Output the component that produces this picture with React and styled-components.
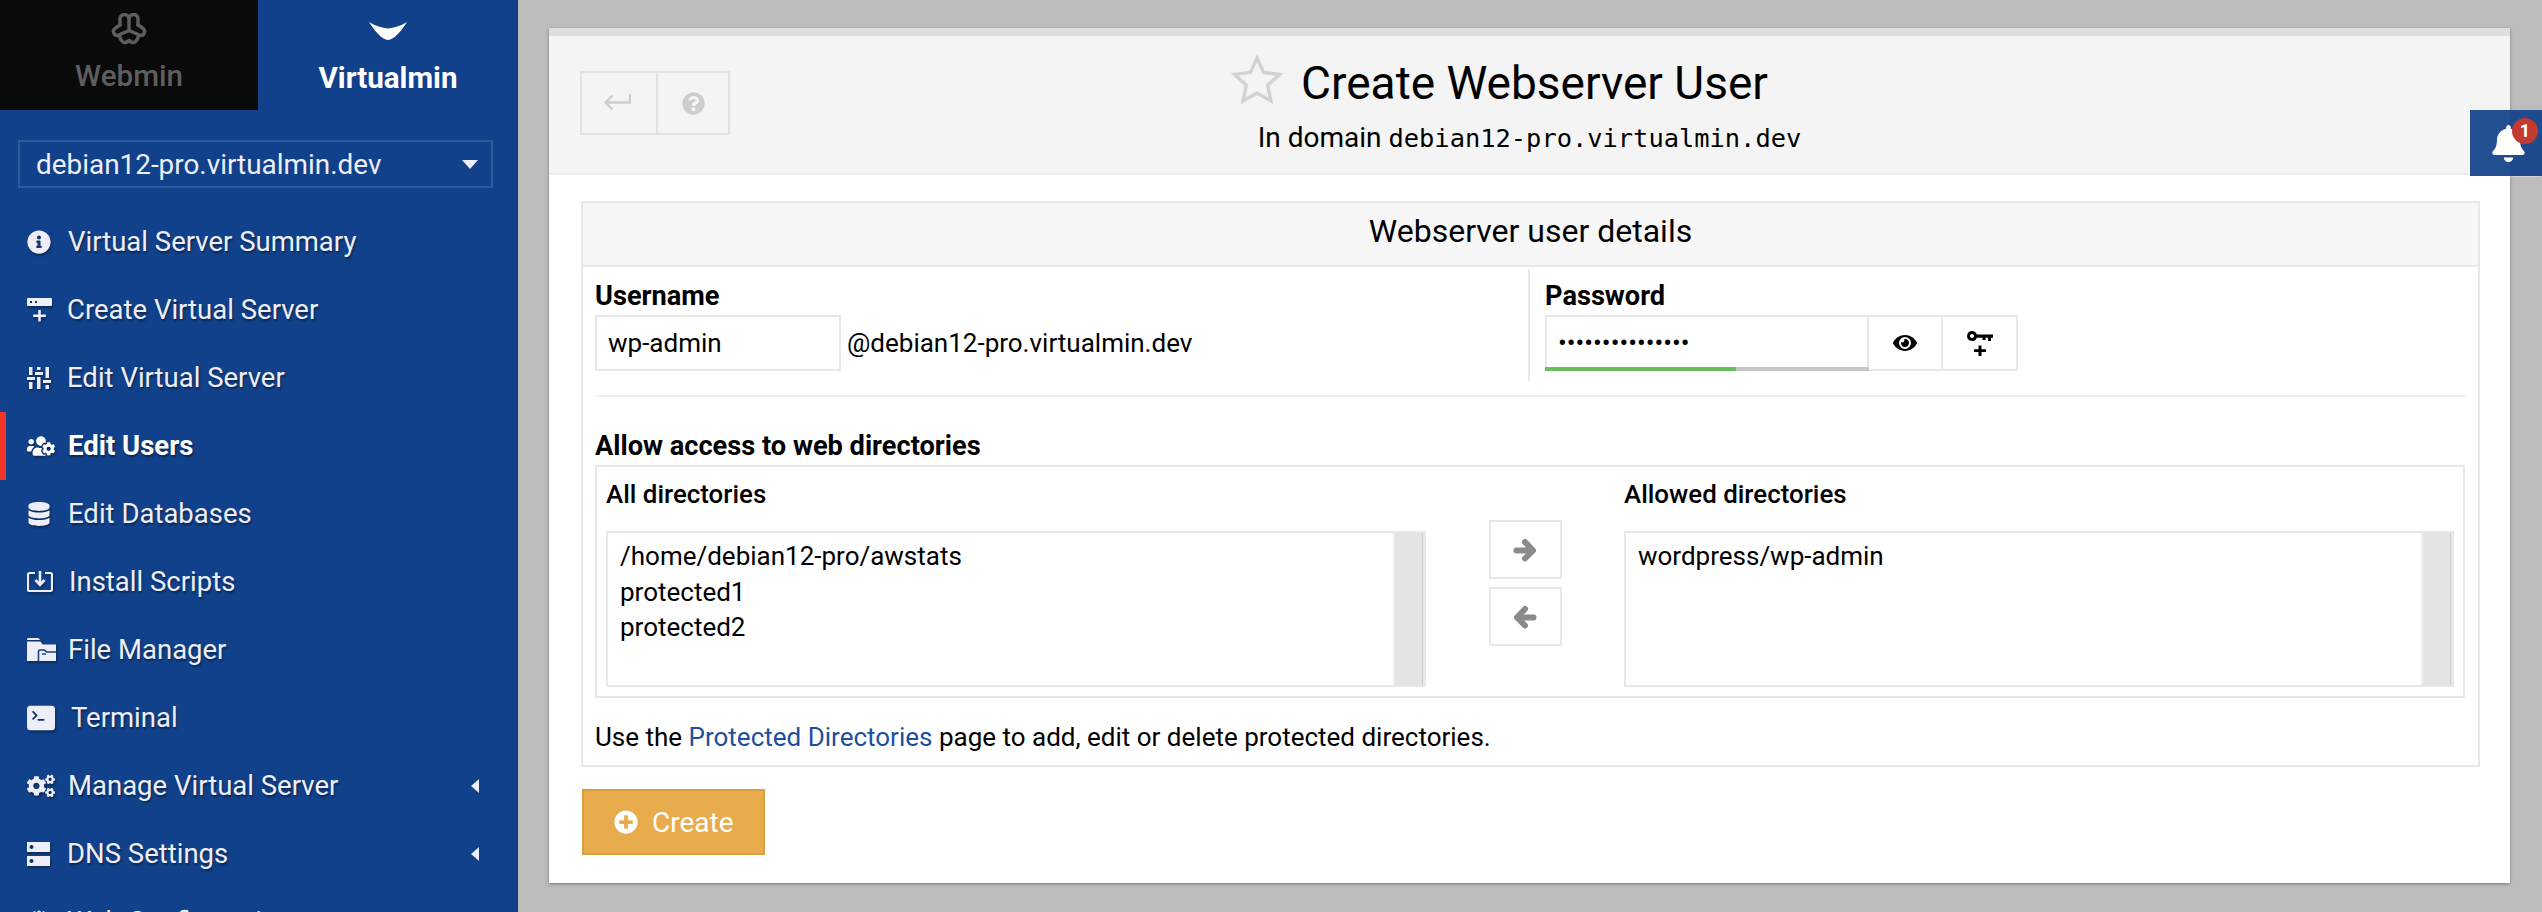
import React from 'react'
import styled, { createGlobalStyle } from 'styled-components'
import {
  FaInfoCircle, FaUsersCog, FaDatabase, FaCogs, FaGlobe, FaEye,
  FaQuestionCircle, FaBell, FaPlusCircle,
} from 'react-icons/fa'
import { BsTerminalFill } from 'react-icons/bs'

const GlobalStyle = createGlobalStyle`
  html, body { margin: 0; padding: 0; height: 100%; background: #bcbcbc; }
  body { font-family: Roboto, "Liberation Sans", sans-serif; font-size: 26px; color: #000; overflow: hidden; }
  * { box-sizing: border-box; }
`

const Page = styled.div`
  display: flex;
  height: 912px;
  position: relative;
  overflow: hidden;
`

const Sidebar = styled.aside`
  flex: 0 0 518px;
  height: 912px;
  overflow: hidden;
  background: #11418a;
  color: #eeeef9;
`

const Tabs = styled.div`
  display: grid;
  grid-template-columns: 258px 1fr;
  height: 110px;
`

const Tab = styled.div`
  display: flex;
  flex-direction: column;
  align-items: center;
  background: ${p => (p.$active ? 'transparent' : '#0a0a0a')};
  color: ${p => (p.$active ? '#fff' : '#5e5e5e')};
  font-weight: ${p => (p.$active ? 700 : 500)};
  font-size: 29.6px;
  height: 110px;
  padding-top: ${p => (p.$active ? '22px' : '13px')};
`

const TabLabel = styled.span`
  line-height: 34px;
  margin-top: ${p => p.$gap}px;
`

const ServerSelect = styled.div`
  display: flex;
  align-items: center;
  justify-content: space-between;
  height: 48px;
  margin: 30px 25px 0 18px;
  padding: 0 13px 0 16px;
  border: 2px solid #2f5b9c;
  font-size: 27.9px;
  color: #eeeef9;
`

const Caret = styled.span`
  width: 0;
  height: 0;
  border-left: 8px solid transparent;
  border-right: 8px solid transparent;
  border-top: 9px solid #eeeef9;
`

const Menu = styled.nav`
  margin-top: 20px;
`

const MenuItem = styled.div`
  display: flex;
  align-items: center;
  height: 68px;
  padding: 0 39px 0 ${p => (p.$active ? 21 : 27)}px;
  border-left: ${p => (p.$active ? '6px solid #f13528' : 'none')};
  font-size: 27.5px;
  font-weight: ${p => (p.$active ? 700 : 400)};
  color: ${p => (p.$active ? '#fff' : '#eeeef9')};
  text-shadow: 1px 2px 2px rgba(0, 0, 0, 0.4);
`

const MenuIcon = styled.span`
  flex: 0 0 ${p => p.$slot}px;
  display: flex;
  align-items: center;
  font-size: ${p => p.$size || 24}px;
  filter: drop-shadow(1px 2px 1px rgba(0, 0, 0, 0.35));
`

const MenuText = styled.span`
  flex: 1;
  margin-top: -2px;
`

const Collapse = styled.span`
  width: 0;
  height: 0;
  border-top: 7px solid transparent;
  border-bottom: 7px solid transparent;
  border-right: 8px solid #eeeef9;
`

const Main = styled.main`
  flex: 1;
  padding: 28px 32px 0 31px;
`

const Panel = styled.section`
  height: 855px;
  background: #fff;
  box-shadow: 0 1px 3px rgba(0, 0, 0, 0.35);
`

const PanelTop = styled.header`
  display: grid;
  grid-template-columns: 1fr auto 1fr;
  height: 147px;
  padding: 0 31px;
  background: #f4f4f4;
  border-top: 8px solid #dedede;
  border-bottom: 2px solid #ebebeb;
`

const BackGroup = styled.div`
  display: flex;
  align-self: start;
  justify-self: start;
  margin-top: 35px;
  border: 2px solid #e2e2e2;
`

const BackButton = styled.span`
  display: flex;
  align-items: center;
  justify-content: center;
  width: ${p => p.$w}px;
  height: 60px;
  color: #cdcdcd;
  font-size: 23px;
  border-left: ${p => (p.$first ? 'none' : '2px solid #e2e2e2')};
`

const TitleBlock = styled.div`
  display: flex;
  flex-direction: column;
  align-items: center;
`

const TitleRow = styled.div`
  display: flex;
  align-items: center;
  gap: 17px;
  padding-right: 61px;
  height: 76px;
  margin-top: 9px;
`

const Title = styled.h1`
  margin: 0;
  font-size: 46px;
  font-weight: 400;
  line-height: 60px;
  white-space: nowrap;
`

const Subtitle = styled.div`
  margin-top: 0;
  font-size: 28px;
  line-height: 34px;
  white-space: nowrap;
`

const Mono = styled.span`
  font-family: "DejaVu Sans Mono", "Liberation Mono", monospace;
  font-size: 25.4px;
`

const Body = styled.div`
  padding: 26px 30px 0 32px;
`

const Table = styled.div`
  border: 2px solid #e8e8e8;
`

const TableHead = styled.div`
  display: flex;
  align-items: center;
  justify-content: center;
  height: 64px;
  padding-bottom: 6px;
  background: #f7f7f7;
  border-bottom: 2px solid #e8e8e8;
  font-size: 32px;
`

const TableBody = styled.div`
  padding: 2px 13px 11px 12px;
`

const Columns = styled.div`
  display: grid;
  grid-template-columns: 935px 1fr;
`

const Column = styled.div`
  padding: 10px 0 10px ${p => (p.$right ? 15 : 0)}px;
  border-right: ${p => (p.$right ? 'none' : '2px solid #e8e8e8')};
`

const Label = styled.div`
  font-weight: 700;
  line-height: 34px;
  font-size: 27.2px;
`

const FieldRow = styled.div`
  display: flex;
  align-items: center;
  margin-top: 2px;
`

const TextInput = styled.input`
  width: ${p => p.$w}px;
  height: 56px;
  padding: 0 11px;
  border: 2px solid #e8e8e8;
  border-radius: 0;
  font: inherit;
  color: #000;
  outline: none;
  background: #fff;
`

const Domain = styled.span`
  margin-left: 6px;
`

const PasswordWrap = styled.div`
  position: relative;
  width: 324px;
  height: 56px;
`

const Strength = styled.div`
  position: absolute;
  left: 0;
  right: 0;
  bottom: 0;
  height: 4px;
  background: #c6c6c6;
`

const StrengthBar = styled.div`
  height: 100%;
  background: #6abd5f;
`

const IconButton = styled.span`
  display: flex;
  align-items: center;
  justify-content: center;
  width: ${p => p.$w}px;
  height: 56px;
  margin-left: -2px;
  border: 2px solid #e8e8e8;
  font-size: 24px;
  color: #000;
`

const Rule = styled.hr`
  margin: 14px 0 0 1px;
  border: 0;
  height: 2px;
  background: #eeeeee;
`

const SectionLabel = styled(Label)`
  margin-top: 32px;
`

const PickerBox = styled.div`
  display: grid;
  grid-template-columns: 820px 1fr 830px;
  margin-top: 2px;
  height: 233px;
  padding: 10px 9px 9px;
  border: 2px solid #e8e8e8;
`

const PickerColumn = styled.div`
  display: flex;
  flex-direction: column;
`

const PickerLabel = styled(Label)`
  font-size: 25.9px;
  font-weight: 500;
  margin-bottom: 20px;
`

const ListBox = styled.div`
  display: flex;
  height: 156px;
  border: 2px solid #e8e8e8;
  border-right-width: 3px;
`

const ListLines = styled.div`
  flex: 1;
  padding: 6px 12px;
  line-height: 35.5px;
  border-right: 2px solid #efefef;
`

const ListTrack = styled.div`
  flex: 0 0 28px;
  background: #e4e4e4;
  border-right: 1px solid #cfcfcf;
`

const MoveButtons = styled.div`
  display: flex;
  flex-direction: column;
  align-items: center;
  gap: 8px;
  margin-top: 43px;
`

const MoveButton = styled.span`
  display: flex;
  align-items: center;
  justify-content: center;
  width: 73px;
  height: 59px;
  border: 2px solid #e8e8e8;
`

const Help = styled.p`
  margin: 22px 0 0;
  line-height: 34px;
`

const HelpLink = styled.a`
  color: #1c4fa0;
  text-decoration: none;
`

const CreateButton = styled.button`
  display: flex;
  align-items: center;
  gap: 14px;
  width: 183px;
  height: 66px;
  margin: 22px 0 0 1px;
  padding: 0 0 0 30px;
  border: 2px solid #d9a043;
  border-radius: 0;
  background: #e8ac4c;
  color: #fff;
  font: inherit;
  font-size: 28px;
  svg { width: 24px; height: 24px; }
`

const Bell = styled.div`
  position: absolute;
  top: 110px;
  right: 0;
  width: 72px;
  height: 66px;
  background: rgba(17, 65, 138, 0.92);
  color: #fff;
  font-size: 37px;
  display: flex;
  align-items: center;
  justify-content: center;
  padding-left: 4px;
  box-shadow: -1px 1px 1px rgba(255, 255, 255, 0.3);
`

const Badge = styled.span`
  position: absolute;
  top: 8px;
  right: 4px;
  width: 26px;
  height: 26px;
  border-radius: 50%;
  background: #c33a30;
  color: #fff;
  font-size: 18px;
  font-weight: 700;
  line-height: 26px;
  text-align: center;
`

const WebminLogo = () => (
  <svg width="36" height="32" viewBox="0 0 36 32" fill="none" stroke="#5e5e5e" strokeWidth="3.400" strokeLinejoin="round" strokeLinecap="round">
    <path d="M9 12V6.500a4.500 4.500 0 0 1 9-1 4.500 4.500 0 0 1 9 1V12" />
    <path d="M18 5v12" />
    <path d="M9 12L4.500 15A4 4 0 0 0 6.500 22.500L18 17.500L29.500 22.500A4 4 0 0 0 31.500 15L27 12" />
    <path d="M8.500 23C9.500 27 12 30.500 15 29.500L18 27.500L21 29.500C24 30.500 26.500 27 27.500 23" />
  </svg>
)

const VirtualminLogo = () => (
  <svg width="38" height="18" viewBox="0 0 38 18" fill="#fff">
    <path d="M0 0C7 4 13 6 19 6.500 25 6 31 4 38 0 33 8 25 18 19 18 13 18 5 8 0 0Z" />
  </svg>
)

const StarIcon = () => (
  <svg width="54" height="52" viewBox="0 0 54 52" fill="none" stroke="#d2d2d2" strokeWidth="3.400" strokeLinejoin="miter" style={{ marginTop: '-9px' }}>
    <path d="M27 5l6.600 14.500 15.900 1.900-11.800 10.800 3.200 15.700L27 40l-13.900 7.900 3.200-15.700L4.500 21.400l15.900-1.900Z" />
  </svg>
)

const ServerPlusIcon = () => (
  <svg width="25" height="24" viewBox="0 0 25 24" fill="#eeeef9" fillRule="evenodd">
    <path d="M1 0h23a1 1 0 0 1 1 1v6a1 1 0 0 1-1 1H1a1 1 0 0 1-1-1V1a1 1 0 0 1 1-1ZM3 3v2h2V3ZM8 3v2h2V3Z" />
    <path d="M11.200 12h2.600v4.500h5v2.600h-5v4.500h-2.600v-4.500h-5v-2.600h5Z" />
  </svg>
)

const SlidersIcon = () => (
  <svg width="24" height="22" viewBox="0 0 24 22" fill="#eeeef9">
    <path d="M2 0h3.500v8H2ZM0 10h8v3H0ZM2 15h3.500v7H2Z" />
    <path d="M10 0h3.500v3H10ZM8 5h8v3H8ZM10 10h3.500v12H10Z" />
    <path d="M18.500 0H22v11h-3.500ZM16 13h8v3h-8ZM18.500 18H22v4h-3.500Z" />
  </svg>
)

const InstallIcon = () => (
  <svg width="26" height="22" viewBox="0 0 26 22" fill="none" stroke="#eeeef9" strokeWidth="2.200">
    <path d="M8 2H2.500A1.500 1.500 0 0 0 1 3.500v15A1.500 1.500 0 0 0 2.500 20h21a1.500 1.500 0 0 0 1.500-1.500v-15A1.500 1.500 0 0 0 23.500 2H18" />
    <path d="M13 0v13M8.500 9l4.500 4.800L17.500 9" strokeWidth="2.600" />
  </svg>
)

const FoldersIcon = () => (
  <svg width="29" height="24" viewBox="0 0 29 24" fill="#eeeef9">
    <path d="M0 1.500A1.500 1.500 0 0 1 1.500 0h9a3 3 0 0 1 2.500 2H0Z" />
    <path d="M0 3.500h13.500L15.500 6.500H29V23H0Z" />
    <path d="M11.500 23V13.500a1.500 1.500 0 0 1 1.500-1.500h4.500l2 2H29" fill="none" stroke="#11418a" strokeWidth="1.600" />
    <path d="M15 16h4" fill="none" stroke="#11418a" strokeWidth="1.400" />
  </svg>
)

const DnsIcon = () => (
  <svg width="23" height="24" viewBox="0 0 23 24" fill="#eeeef9" fillRule="evenodd">
    <path d="M0 0h23v10H0ZM4.500 3a2 2 0 1 0 0 4 2 2 0 0 0 0-4Z" />
    <path d="M0 14h23v10H0ZM4.500 17a2 2 0 1 0 0 4 2 2 0 0 0 0-4Z" />
  </svg>
)

const ReturnIcon = () => (
  <svg width="28" height="17" viewBox="0 0 28 17" fill="none" stroke="#cdcdcd" strokeWidth="2.400" style={{ marginTop: '-2px', marginLeft: '-4px' }}>
    <path d="M27 0v8.500H3M9.500 1.500l-7 7 7 7" />
  </svg>
)

const KeyPlusIcon = () => (
  <svg width="26" height="25" viewBox="0 0 26 25" fill="#000" fillRule="evenodd">
    <path d="M5 0a5 5 0 0 1 4.800 3.500H26v3.200h-2v3.300h-3V6.700h-2.500V9h-3V6.700H9.800A5 5 0 1 1 5 0Zm0 3a2 2 0 1 0 0 4 2 2 0 0 0 0-4Z" />
    <path d="M11.500 14.500h3v3.700h4.500v2.800h-4.500V25h-3v-4H7v-2.800h4.500Z" />
  </svg>
)

const MoveArrow = ({ flip }) => (
  <svg width="24" height="24" viewBox="0 0 24 24" fill="none" stroke="#8a8a8a" strokeWidth="6" strokeLinecap="round" strokeLinejoin="round" style={flip ? { transform: 'scaleX(-1)' } : undefined}>
    <path d="M3.500 12.500H19" />
    <path d="M12 4l8 8.500-8 8" />
  </svg>
)

const menuItems = [
  { label: 'Virtual Server Summary', icon: <FaInfoCircle />, slot: 41 },
  { label: 'Create Virtual Server', icon: <ServerPlusIcon />, slot: 40 },
  { label: 'Edit Virtual Server', icon: <SlidersIcon />, slot: 40 },
  { label: 'Edit Users', icon: <FaUsersCog />, slot: 41, size: 28, active: true },
  { label: 'Edit Databases', icon: <FaDatabase />, slot: 41 },
  { label: 'Install Scripts', icon: <InstallIcon />, slot: 42 },
  { label: 'File Manager', icon: <FoldersIcon />, slot: 41 },
  { label: 'Terminal', icon: <BsTerminalFill />, slot: 44, size: 28 },
  { label: 'Manage Virtual Server', icon: <FaCogs />, slot: 41, size: 28, more: true },
  { label: 'DNS Settings', icon: <DnsIcon />, slot: 40, more: true },
  { label: 'Web Configuration', icon: <FaGlobe />, slot: 40, more: true },
]

function DirectoryList({ lines }) {
  return (
    <ListBox>
      <ListLines>
        {lines.map(line => <div key={line}>{line}</div>)}
      </ListLines>
      <ListTrack />
    </ListBox>
  )
}

export default function App() {
  return (
    <Page>
      <GlobalStyle />
      <Sidebar>
        <Tabs>
          <Tab>
            <WebminLogo />
            <TabLabel $gap={14}>Webmin</TabLabel>
          </Tab>
          <Tab $active>
            <VirtualminLogo />
            <TabLabel $gap={21}>Virtualmin</TabLabel>
          </Tab>
        </Tabs>
        <ServerSelect>
          debian12-pro.virtualmin.dev
          <Caret />
        </ServerSelect>
        <Menu>
          {menuItems.map(item => (
            <MenuItem key={item.label} $active={item.active}>
              <MenuIcon $slot={item.slot} $size={item.size}>{item.icon}</MenuIcon>
              <MenuText>{item.label}</MenuText>
              {item.more && <Collapse />}
            </MenuItem>
          ))}
        </Menu>
      </Sidebar>
      <Main>
        <Panel>
          <PanelTop>
            <BackGroup>
              <BackButton $w={74} $first><ReturnIcon /></BackButton>
              <BackButton $w={72}><FaQuestionCircle /></BackButton>
            </BackGroup>
            <TitleBlock>
              <TitleRow>
                <StarIcon />
                <Title>Create Webserver User</Title>
              </TitleRow>
              <Subtitle>In domain <Mono>debian12-pro.virtualmin.dev</Mono></Subtitle>
            </TitleBlock>
          </PanelTop>
          <Body>
            <Table>
              <TableHead>Webserver user details</TableHead>
              <TableBody>
                <Columns>
                  <Column>
                    <Label>Username</Label>
                    <FieldRow>
                      <TextInput $w={246} readOnly value="wp-admin" />
                      <Domain>@debian12-pro.virtualmin.dev</Domain>
                    </FieldRow>
                  </Column>
                  <Column $right>
                    <Label>Password</Label>
                    <FieldRow>
                      <PasswordWrap>
                        <TextInput $w={324} type="password" readOnly value="abcdefghijklmno" />
                        <Strength><StrengthBar style={{ width: '59%' }} /></Strength>
                      </PasswordWrap>
                      <IconButton $w={76}><FaEye /></IconButton>
                      <IconButton $w={77}><KeyPlusIcon /></IconButton>
                    </FieldRow>
                  </Column>
                </Columns>
                <Rule />
                <SectionLabel>Allow access to web directories</SectionLabel>
                <PickerBox>
                  <PickerColumn>
                    <PickerLabel>All directories</PickerLabel>
                    <DirectoryList lines={['/home/debian12-pro/awstats', 'protected1', 'protected2']} />
                  </PickerColumn>
                  <MoveButtons>
                    <MoveButton><MoveArrow /></MoveButton>
                    <MoveButton><MoveArrow flip /></MoveButton>
                  </MoveButtons>
                  <PickerColumn>
                    <PickerLabel>Allowed directories</PickerLabel>
                    <DirectoryList lines={['wordpress/wp-admin']} />
                  </PickerColumn>
                </PickerBox>
                <Help>Use the <HelpLink>Protected Directories</HelpLink> page to add, edit or delete protected directories.</Help>
              </TableBody>
            </Table>
            <CreateButton><FaPlusCircle />Create</CreateButton>
          </Body>
        </Panel>
      </Main>
      <Bell>
        <FaBell />
        <Badge>1</Badge>
      </Bell>
    </Page>
  )
}
